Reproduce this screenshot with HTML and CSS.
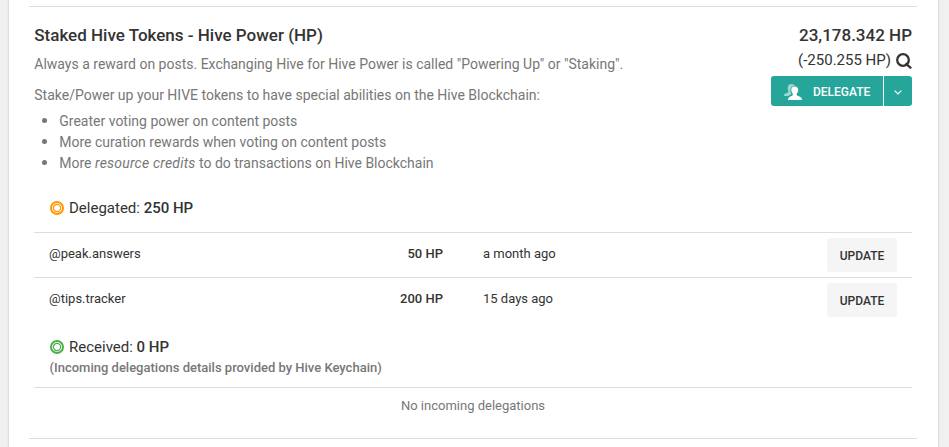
FILE: index.html
```html
<!DOCTYPE html>
<html lang="en">
<head>
    <meta charset="UTF-8">
    <meta name="viewport" content="width=device-width, initial-scale=1.0">
    <title>Wallet - Hive Power</title>
    <link rel="stylesheet" href="styles.css">
</head>
<body>
    <main class="wallet">
        <section class="token">
            <div class="token-header">
                <div class="token-info">
                    <h2>Staked Hive Tokens - Hive Power (HP)</h2>
                    <p>Always a reward on posts. Exchanging Hive for Hive Power is called "Powering Up" or "Staking".</p>
                    <p class="abilities">Stake/Power up your HIVE tokens to have special abilities on the Hive Blockchain:</p>
                    <ul>
                        <li>Greater voting power on content posts</li>
                        <li>More curation rewards when voting on content posts</li>
                        <li>More <em>resource credits</em> to do transactions on Hive Blockchain</li>
                    </ul>
                </div>
                <div class="token-balance">
                    <div class="balance">23,178.342 HP</div>
                    <div class="balance-delegated">
                        <span>(-250.255 HP)</span>
                        <svg class="icon-search" viewBox="0 0 16 16"><circle cx="7" cy="7" r="5.8"/><path d="M9.500 10.300L15.200 15.300"/></svg>
                    </div>
                    <div class="btn-group">
                        <button class="btn-delegate">
                            <svg class="icon-users" viewBox="0 0 18 16">
                                <path opacity=".55" d="M7.500 0c1.800 0 3 .7 3.400 1.800C8 2 6.200 4 6.400 6.800c.1 1.300.5 2.200 1.100 3L4.500 12H0c0-2 1.200-2.400 3.800-3.400.9-.4.8-1.100.4-1.900C3.200 3.500 3.800 0 7.500 0z"/>
                                <path d="M10.700 2.500c2.700 0 3.800 1.800 3.500 4-.2 1.400-.7 2.400-1.500 3.200-.2 1 .2 1.700 1 2 2.400.9 4.300 1.500 4.300 4.300H4c0-2.800 1.600-3.400 4-4.300.8-.3 1-1 .8-2-.8-.8-1.300-1.800-1.500-3.200-.3-2.200.7-4 3.400-4z"/>
                            </svg>
                            DELEGATE
                        </button>
                        <button class="btn-more">
                            <svg class="icon-chevron" viewBox="0 0 8 5"><path d="M.7.7L4 4 7.300.7"/></svg>
                        </button>
                    </div>
                </div>
            </div>

            <!-- Outgoing delegations -->
            <div class="delegations">
                <h3>
                    <svg class="icon-ring outgoing" viewBox="0 0 14 14"><circle cx="7" cy="7" r="6"/><circle class="inner" cx="7" cy="7" r="3.600"/></svg>
                    <span>Delegated: <b>250 HP</b></span>
                </h3>
                <div class="row">
                    <span class="account">@peak.answers</span>
                    <span class="amount">50 HP</span>
                    <span class="time">a month ago</span>
                    <button class="btn-update">UPDATE</button>
                </div>
                <div class="row">
                    <span class="account">@tips.tracker</span>
                    <span class="amount">200 HP</span>
                    <span class="time">15 days ago</span>
                    <button class="btn-update">UPDATE</button>
                </div>
            </div>

            <!-- Incoming delegations -->
            <div class="delegations received">
                <h3>
                    <svg class="icon-ring incoming" viewBox="0 0 14 14"><circle cx="7" cy="7" r="6"/><circle class="inner" cx="7" cy="7" r="3.600"/></svg>
                    <span>Received: <b>0 HP</b></span>
                </h3>
                <p class="note">(Incoming delegations details provided by Hive Keychain)</p>
                <div class="empty">No incoming delegations</div>
            </div>
        </section>
    </main>
</body>
</html>
```
FILE: styles.css
```css
* {
    box-sizing: border-box;
}

body {
    margin: 0;
    font-family: Roboto, sans-serif;
    font-size: 14px;
    line-height: 21px;
    background-color: #f0f0f0;
    color: #333;
    overflow: hidden;
}

h2, h3, p, ul {
    margin: 0;
}

button {
    border: none;
    font-family: inherit;
    font-size: 12px;
    font-weight: 500;
    cursor: pointer;
}

svg {
    fill: none;
    flex-shrink: 0;
}

.wallet {
    width: 929px;
    height: 447px;
    margin-left: 9px;
    padding: 6px 21px 0 20px;
    background-color: white;
    box-shadow: 0 0 2px rgba(0, 0, 0, 0.25);
}

.token {
    height: 433px;
    padding: 18px 5px 0;
    border-top: 1px solid #ddd;
    border-bottom: 1px solid #ddd;
}

/* Header */
.token-header {
    display: flex;
    justify-content: space-between;
    height: 171px;
}

.token-info {
    padding-left: 0.3px;
    color: #777;
}

.token-info h2 {
    margin-bottom: 8px;
    font-size: 17px;
    font-weight: 500;
    color: #333;
}

.token-info .abilities {
    margin: 10px 0 5px;
}

.token-info ul {
    padding-left: 25px;
    list-style: none;
}

.token-info li::before {
    content: "";
    display: inline-block;
    width: 5px;
    height: 5px;
    margin: 0 12.500px 3px -17.500px;
    border-radius: 50%;
    background-color: #777;
}

.token-info em {
    letter-spacing: 0.2px;
}

.token-balance {
    display: flex;
    flex-direction: column;
    align-items: flex-end;
}

.balance {
    font-size: 17px;
    font-weight: 500;
}

.balance-delegated {
    display: flex;
    align-items: center;
    gap: 5px;
    margin-top: 4px;
    font-size: 15px;
}

.icon-search {
    width: 16px;
    height: 16px;
    stroke: #333;
    stroke-width: 2.3;
}

.btn-group {
    display: flex;
    gap: 1px;
    margin-top: 5px;
}

.btn-group button {
    display: flex;
    align-items: center;
    height: 30px;
    background-color: #26a69a;
    color: white;
}

.btn-group .btn-delegate {
    gap: 11px;
    width: 112px;
    padding: 1px 0 0 13px;
    border-radius: 3px 0 0 3px;
}

.btn-group .btn-more {
    justify-content: center;
    width: 28px;
    padding: 2px 0 0;
    border-radius: 0 3px 3px 0;
}

.icon-users {
    width: 18px;
    height: 16px;
    fill: white;
}

.icon-chevron {
    width: 8px;
    height: 5px;
    stroke: white;
    stroke-width: 1.2;
}

/* Delegations */
.delegations h3 {
    display: flex;
    align-items: center;
    height: 24px;
    padding-left: 16px;
    font-size: 15px;
    font-weight: 400;
}

.delegations b {
    font-weight: 500;
}

.icon-ring {
    width: 14px;
    height: 14px;
    margin-right: 5px;
    stroke-width: 2;
}

.icon-ring .inner {
    stroke-width: 1.2;
}

.outgoing {
    stroke: #ff9800;
}

.incoming {
    stroke: #4caf50;
}

.row {
    display: grid;
    grid-template-columns: 272px 122px 1fr 70px;
    height: 45px;
    padding: 5px 15px;
    border-top: 1px solid #ddd;
    font-size: 13px;
    line-height: 31px;
}

.delegations h3 + .row {
    margin-top: 12px;
}

.amount {
    text-align: right;
    font-weight: 500;
}

.time {
    padding-left: 40px;
}

.btn-update {
    height: 34px;
    padding: 2px 0 0;
    border-radius: 3px;
    background-color: #f5f5f5;
    color: #333;
}

.received {
    padding-top: 13px;
}

.note {
    padding-left: 15.500px;
    font-size: 13px;
    font-weight: 500;
    line-height: 18px;
    color: #777;
}

.empty {
    margin-top: 10px;
    padding-top: 7px;
    border-top: 1px solid #ddd;
    font-size: 13px;
    text-align: center;
    color: #777;
}
```
